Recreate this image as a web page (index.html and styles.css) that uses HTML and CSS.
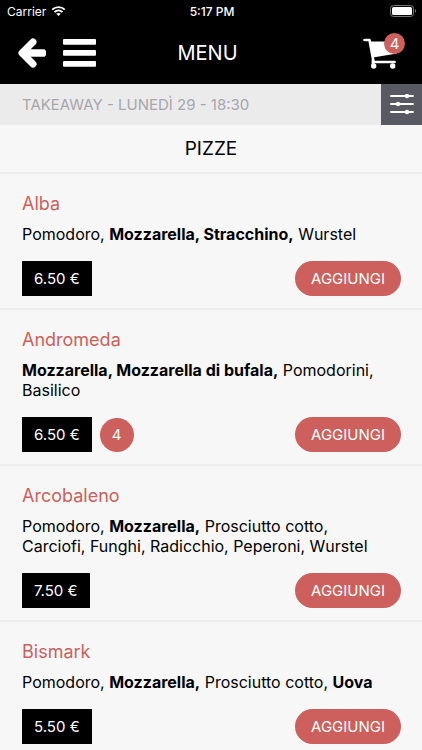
FILE: index.html
```html
<!DOCTYPE html>
<html lang="it">
<head>
<meta charset="utf-8">
<meta name="viewport" content="width=device-width, initial-scale=1">
<title>Menu</title>
<link rel="stylesheet" href="styles.css">
</head>
<body>
<header class="top">
  <div class="status">
    <div class="carrier">Carrier
      <svg width="15" height="12" viewBox="0 0 16 12" fill="none" stroke="#fff" stroke-width="2"><path d="M1.300 4.600C5 .9 11 .9 14.700 4.600M3.700 7.200C6.200 4.900 9.800 4.900 12.300 7.200"/><path d="M8 11.300 5.600 8.900C6.900 7.800 9.100 7.800 10.400 8.900Z" fill="#fff" stroke="none"/></svg>
    </div>
    <div class="time">5:17 PM</div>
    <svg class="battery" width="27" height="12" viewBox="0 0 27 12"><rect x=".5" y=".5" width="23" height="11" rx="3" fill="none" stroke="#777"/><rect x="2" y="2" width="20" height="8" rx="1.500" fill="#fff"/><path d="M25 4.200C26.500 4.800 26.500 7.200 25 7.800Z" fill="#777"/></svg>
  </div>
  <div class="nav">
    <div class="nav-left">
      <button class="icon" type="button" aria-label="Indietro"><svg width="28" height="30" viewBox="0 0 28 30" fill="none" stroke="#fff" stroke-width="7"><path d="M15 4 4 15 15 26" stroke-linecap="round" stroke-linejoin="round"/><path d="M5 15H27"/><path d="M8 15H25" stroke-linecap="round"/></svg></button>
      <button class="icon" type="button" aria-label="Apri menu"><svg width="33" height="28" viewBox="0 0 33 28" fill="#fff"><rect width="33" height="5.700" rx="1"/><rect y="11" width="33" height="5.700" rx="1"/><rect y="22" width="33" height="5.700" rx="1"/></svg></button>
    </div>
    <h1>MENU</h1>
    <button class="icon cart" type="button" aria-label="Carrello, 4"><svg width="34" height="32" viewBox="0 0 34 32"><path d="M1.500 3H6.500L10.500 24.500M10 22V28" fill="none" stroke="#fff" stroke-width="2.600" stroke-linecap="round" stroke-linejoin="round"/><path d="M10 25H31.500" stroke="#fff" stroke-width="2.600" stroke-linecap="round"/><path d="M7 4.500H34V16.500L10 20.500Z" fill="#fff"/><circle cx="10.700" cy="29" r="2.700" fill="#fff"/><circle cx="29.700" cy="29" r="2.700" fill="#fff"/></svg><span class="badge">4</span></button>
  </div>
</header>
<div class="order">
  <p>TAKEAWAY - LUNEDÌ 29 - 18:30</p>
  <button class="filter" type="button" aria-label="Filtri"><svg width="26" height="22" viewBox="0 0 26 22" fill="#fff" stroke="#fff" stroke-width="2" stroke-linecap="round"><path d="M2 2H24M2 10H24M2 18H24"/><circle cx="18" cy="2" r="1.200"/><circle cx="9" cy="10" r="1.200"/><circle cx="18" cy="18" r="1.200"/></svg></button>
</div>
<main>
  <h2 class="category">PIZZE</h2>
  <article class="item">
    <h3>Alba</h3>
    <p>Pomodoro, <b>Mozzarella, Stracchino,</b> Wurstel</p>
    <div class="actions"><span class="price">6.50 €</span><button class="add" type="button">AGGIUNGI</button></div>
  </article>
  <article class="item">
    <h3>Andromeda</h3>
    <p><b>Mozzarella, Mozzarella di bufala,</b> Pomodorini, Basilico</p>
    <div class="actions"><span class="price">6.50 €</span><span class="count">4</span><button class="add" type="button">AGGIUNGI</button></div>
  </article>
  <article class="item">
    <h3>Arcobaleno</h3>
    <p>Pomodoro, <b>Mozzarella,</b> Prosciutto cotto, Carciofi, Funghi, Radicchio, Peperoni, Wurstel</p>
    <div class="actions"><span class="price">7.50 €</span><button class="add" type="button">AGGIUNGI</button></div>
  </article>
  <article class="item">
    <h3>Bismark</h3>
    <p>Pomodoro, <b>Mozzarella,</b> Prosciutto cotto, <b>Uova</b></p>
    <div class="actions"><span class="price">5.50 €</span><button class="add" type="button">AGGIUNGI</button></div>
  </article>
</main>
</body>
</html>
```
FILE: styles.css
```css
* { box-sizing: border-box; }
html { scrollbar-width: none; }
body {
  margin: 0;
  background: #f7f7f7;
  color: #000;
  font-family: Inter, "Liberation Sans", sans-serif;
  font-size: 15px;
}
h1, h2, h3, p { margin: 0; font-weight: 400; }
button { border: 0; padding: 0; font: inherit; color: inherit; background: none; }
svg { display: block; }

.top { background: #000; color: #fff; }
.status {
  display: grid;
  grid-template-columns: 1fr auto 1fr;
  align-items: center;
  height: 22px;
  padding: 0 5px 0 7px;
  font-size: 12px;
}
.carrier { display: flex; align-items: center; gap: 5px; }
.time { font-weight: 500; }
.battery { justify-self: end; }
.nav {
  display: grid;
  grid-template-columns: 1fr auto 1fr;
  align-items: center;
  height: 62px;
  padding: 0 25px 0 18px;
}
.nav-left { display: flex; align-items: center; gap: 17px; }
.nav h1 { font-size: 20px; }
.cart { position: relative; justify-self: end; }
.badge {
  position: absolute;
  top: -4px;
  right: -8px;
  width: 21px;
  border-radius: 50%;
  background: #cd5f5c;
  line-height: 21px;
}

.order {
  display: flex;
  justify-content: space-between;
  align-items: center;
  height: 41px;
  padding-left: 22px;
  background: #ebebeb;
  color: #a6a6ab;
}
.filter {
  display: grid;
  place-items: center;
  width: 41px;
  height: 41px;
  background: #595963;
}

.category {
  height: 49px;
  border-bottom: 2px solid #ececec;
  font-size: 19px;
  line-height: 48px;
  text-align: center;
}
.item {
  padding: 18px 21px 12px 22px;
  border-bottom: 2px solid #ececec;
}
.item h3 { color: #cd5f5c; font-size: 18px; line-height: 24px; }
.item p {
  margin: 8px 0 17px;
  padding-right: 12px;
  font-size: 16px;
  line-height: 20px;
}
.actions { display: flex; align-items: center; gap: 8px; }
.price { padding: 0 12px; background: #000; color: #fff; line-height: 35px; }
.count {
  width: 34px;
  border-radius: 50%;
  background: #cd5f5c;
  color: #fff;
  line-height: 34px;
  text-align: center;
}
.add {
  margin-left: auto;
  padding: 0 16px;
  border-radius: 18px;
  background: #cd5f5c;
  color: #fff;
  line-height: 35px;
}
```
